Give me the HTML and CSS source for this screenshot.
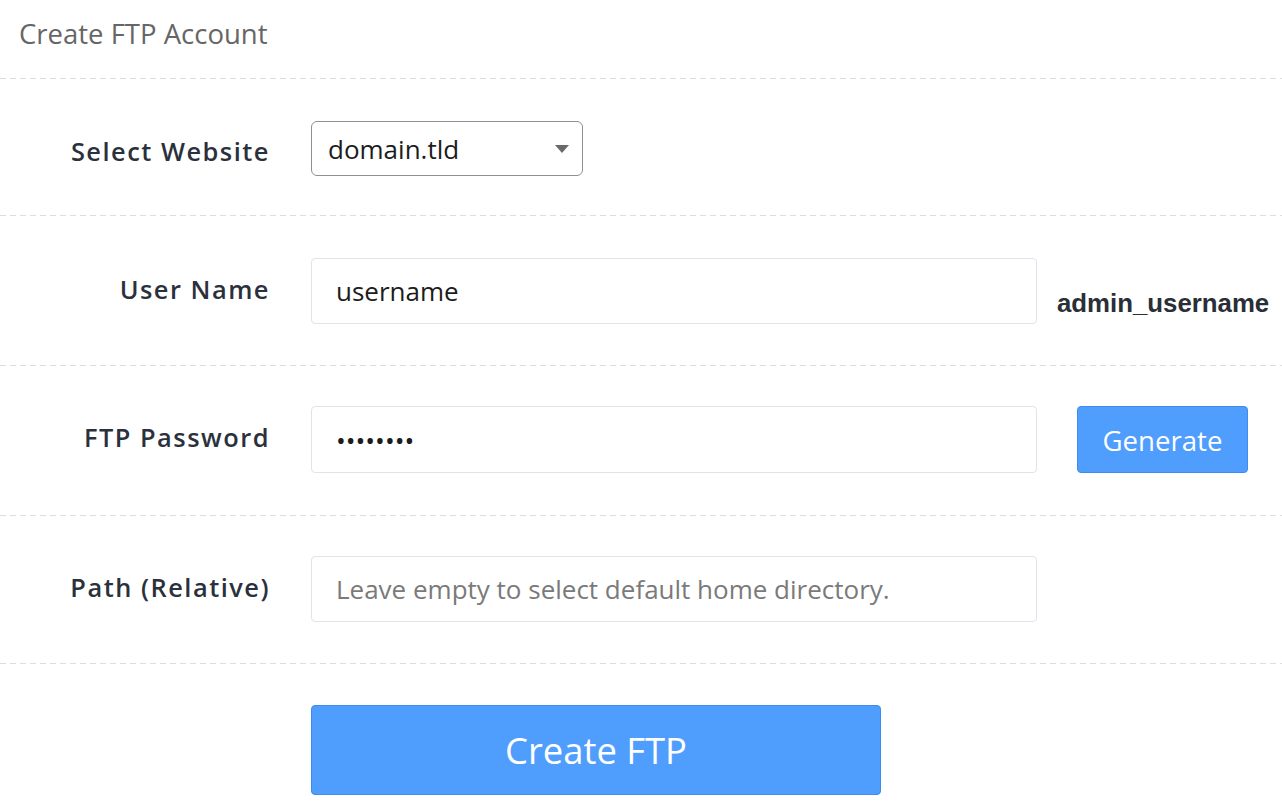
FILE: index.html
```html
<!DOCTYPE HTML>
<html>
<head>
    <title>Create FTP Account</title>
    <link rel="stylesheet" href="styles.css">
</head>
<body>

<div id="panel">
    <h2 class="panel-title">Create FTP Account</h2>

    <form class="ftp-form" onsubmit="return false;">
        <div class="form-row row-website">
            <label class="form-label">Select Website</label>
            <div class="select-wrap">
                <select class="form-select">
                    <option>domain.tld</option>
                </select>
            </div>
        </div>

        <div class="form-row row-user">
            <label class="form-label">User Name</label>
            <input class="form-input" type="text" value="username">
            <span class="user-prefix">admin_username</span>
        </div>

        <div class="form-row row-password">
            <label class="form-label">FTP Password</label>
            <input class="form-input" type="password" value="password">
            <button class="btn btn-generate" type="button">Generate</button>
        </div>

        <div class="form-row row-path">
            <label class="form-label">Path (Relative)</label>
            <input class="form-input" type="text" placeholder="Leave empty to select default home directory.">
        </div>

        <div class="form-row form-actions">
            <button class="btn btn-create" type="submit">Create FTP</button>
        </div>
    </form>
</div>

</body>
</html>
```

FILE: styles.css
```css
body, html {
    width: 100%;
    height: 100%;
    padding: 0;
    margin: 0;
    background: #fff;
    font-family: "Open Sans", "Noto Sans", sans-serif;
    color: #2b313c;
    overflow: hidden;
}

.panel-title {
    margin: 0;
    height: 78px;
    padding-left: 19px;
    font-size: 27.5px;
    font-weight: 400;
    line-height: 68px;
    color: #666;
}

/* dashed separators */
.form-row {
    display: flex;
    align-items: center;
    border-top: 1px solid transparent;
    border-image: repeating-linear-gradient(to right, #dcdde4 0 6px, transparent 6px 10px) 1 0 0 0;
}

.row-website  { padding: 42px 0 39px; }
.row-user     { padding: 42px 0 41px; }
.row-password { padding: 40px 0 42px; }
.row-path     { padding: 40px 0 41px; }

.form-label {
    width: 270px;
    padding-bottom: 5px;
    text-align: right;
    font-size: 25.4px;
    font-weight: 600;
    letter-spacing: 1.5px;
    color: #2b313c;
}

.row-website .form-label {
    padding-top: 5px;
    padding-bottom: 0;
}

.select-wrap {
    position: relative;
    margin-left: 41px;
}

.select-wrap:after {
    content: "";
    position: absolute;
    right: 14px;
    top: 24px;
    border-left: 7px solid transparent;
    border-right: 7px solid transparent;
    border-top: 8px solid #6a6a6a;
    pointer-events: none;
}

.form-select {
    -webkit-appearance: none;
    appearance: none;
    width: 272px;
    height: 55px;
    padding: 0 16px;
    border: 1px solid #8f8f8f;
    border-radius: 6px;
    background: #fff;
    font-family: inherit;
    font-size: 26px;
    color: #1c1c1c;
}

.form-input {
    box-sizing: border-box;
    width: 726px;
    height: 66px;
    margin-left: 41px;
    padding: 0 24px;
    border: 1px solid #dfe3ea;
    border-radius: 4px;
    font-family: inherit;
    font-size: 26px;
    color: #1c1c1c;
    outline: none;
}

.row-password .form-input {
    height: 67px;
}

.form-input::placeholder {
    color: #7a7a7a;
}

.user-prefix {
    margin-left: 20px;
    padding-top: 24px;
    font-family: "Liberation Sans", Arial, sans-serif;
    font-size: 25.8px;
    font-weight: 700;
    color: #2a2e37;
}

.btn {
    font-family: inherit;
    color: #fff;
    background: #4f9dfd;
    border: 1px solid #3c8cf2;
    border-radius: 4px;
    cursor: pointer;
}

.btn-generate {
    width: 171px;
    height: 67px;
    margin-left: 40px;
    font-size: 27.6px;
}

.btn-create {
    width: 570px;
    height: 90px;
    margin-left: 311px;
    font-size: 36.4px;
}

.form-actions {
    padding-top: 41px;
}
```
